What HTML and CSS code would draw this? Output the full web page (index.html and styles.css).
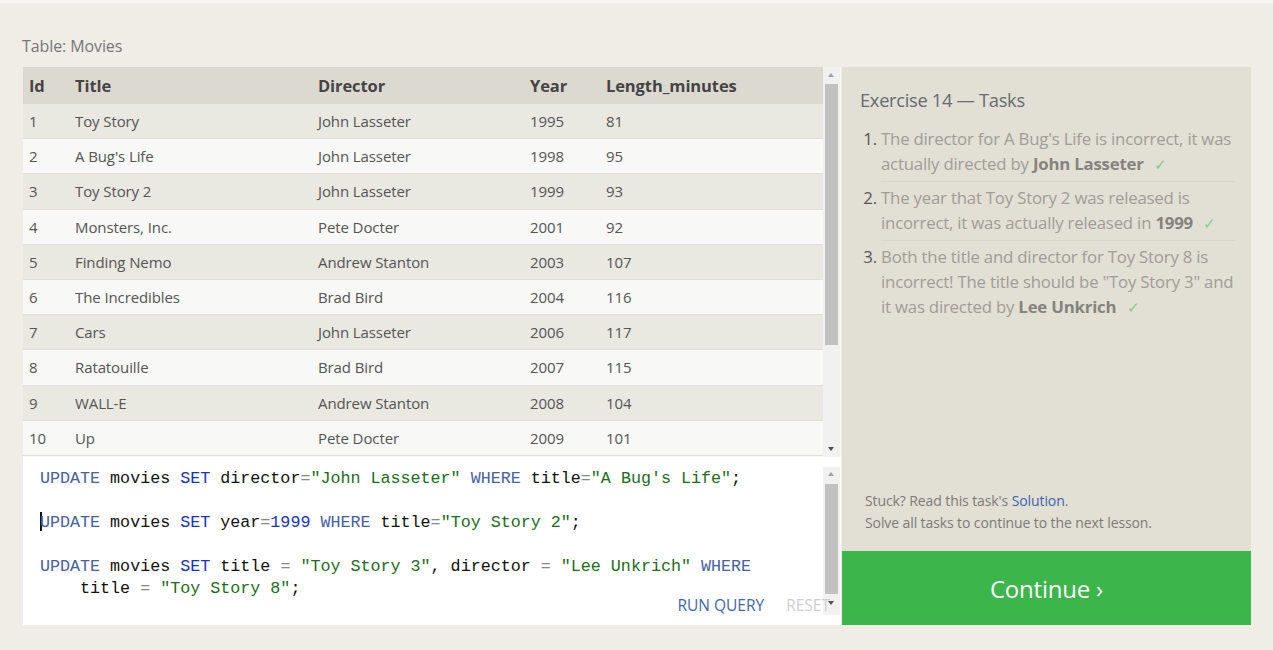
FILE: index.html
```html
<!DOCTYPE html>
<html>
<head>
<meta charset="utf-8">
<link rel="stylesheet" href="styles.css">
</head>
<body>
<div class="topline"></div>
<div class="page">
  <div class="caption">Table: Movies</div>
  <div class="main">
    <div class="left">
      <div class="table-wrap">
        <div class="table-view">
          <table class="movies">
            <thead>
              <tr><th class="c-id">Id</th><th class="c-title">Title</th><th class="c-dir">Director</th><th class="c-year">Year</th><th>Length_minutes</th></tr>
            </thead>
            <tbody>
              <tr><td>1</td><td>Toy Story</td><td>John Lasseter</td><td>1995</td><td>81</td></tr>
              <tr><td>2</td><td>A Bug's Life</td><td>John Lasseter</td><td>1998</td><td>95</td></tr>
              <tr><td>3</td><td>Toy Story 2</td><td>John Lasseter</td><td>1999</td><td>93</td></tr>
              <tr><td>4</td><td>Monsters, Inc.</td><td>Pete Docter</td><td>2001</td><td>92</td></tr>
              <tr><td>5</td><td>Finding Nemo</td><td>Andrew Stanton</td><td>2003</td><td>107</td></tr>
              <tr><td>6</td><td>The Incredibles</td><td>Brad Bird</td><td>2004</td><td>116</td></tr>
              <tr><td>7</td><td>Cars</td><td>John Lasseter</td><td>2006</td><td>117</td></tr>
              <tr><td>8</td><td>Ratatouille</td><td>Brad Bird</td><td>2007</td><td>115</td></tr>
              <tr><td>9</td><td>WALL-E</td><td>Andrew Stanton</td><td>2008</td><td>104</td></tr>
              <tr><td>10</td><td>Up</td><td>Pete Docter</td><td>2009</td><td>101</td></tr>
            </tbody>
          </table>
        </div>
        <div class="scrollbar sb-table">
          <div class="arrow up"></div>
          <div class="thumb"></div>
          <div class="arrow down"></div>
        </div>
      </div>
      <div class="editor">
        <div class="code"><div class="ln"><span class="kw">UPDATE</span> movies <span class="kw2">SET</span> director<span class="op">=</span><span class="str">"John Lasseter"</span> <span class="kw">WHERE</span> title<span class="op">=</span><span class="str">"A Bug's Life"</span>;</div><div class="ln"> </div><div class="ln"><span class="cursor"></span><span class="kw">UPDATE</span> movies <span class="kw2">SET</span> year<span class="op">=</span><span class="num">1999</span> <span class="kw">WHERE</span> title<span class="op">=</span><span class="str">"Toy Story 2"</span>;</div><div class="ln"> </div><div class="ln"><span class="kw">UPDATE</span> movies <span class="kw2">SET</span> title <span class="op">=</span> <span class="str">"Toy Story 3"</span>, director <span class="op">=</span> <span class="str">"Lee Unkrich"</span> <span class="kw">WHERE</span></div><div class="ln">    title <span class="op">=</span> <span class="str">"Toy Story 8"</span>;</div></div>
        <div class="editor-side">
          <div class="scrollbar sb-editor">
            <div class="arrow up"></div>
            <div class="thumb"></div>
            <div class="arrow down"></div>
          </div>
        </div>
        <div class="actions">
          <span class="run">RUN QUERY</span>
          <span class="reset">RESET</span>
        </div>
      </div>
    </div>
    <div class="right">
      <div class="tasks">
        <h2 class="tasks-title">Exercise 14 — Tasks</h2>
        <ol class="task-list">
          <li>The director for A Bug's Life is incorrect, it was actually directed by <b>John Lasseter</b> <span class="check">✓</span></li>
          <li>The year that Toy Story 2 was released is incorrect, it was actually released in <b>1999</b> <span class="check">✓</span></li>
          <li>Both the title and director for Toy Story 8 is incorrect! The title should be "Toy Story 3" and it was directed by <b>Lee Unkrich</b> <span class="check">✓</span></li>
        </ol>
        <div class="stuck">
          <div>Stuck? Read this task's <span class="link">Solution</span>.</div>
          <div>Solve all tasks to continue to the next lesson.</div>
        </div>
      </div>
      <div class="continue">Continue ›</div>
    </div>
  </div>
</div>
</body>
</html>
```

FILE: styles.css
```css
html, body {
  margin: 0;
  padding: 0;
}
body {
  background: #efede6;
  font-family: "Open Sans", "Noto Sans", sans-serif;
  width: 1273px;
  height: 650px;
  overflow: hidden;
}
.topline {
  height: 3px;
  background: #f7f6f2;
}
.page {
  padding: 0 0 0 22px;
}
.caption {
  margin-top: 32px;
  height: 32px;
  font-size: 16px;
  color: #777;
  letter-spacing: -0.1px;
}
.main {
  display: flex;
  align-items: flex-start;
}
.left {
  width: 818px;
  margin-left: 1px;
}
.table-wrap {
  display: flex;
  height: 390px;
  background: #f8f8f6;
}
.table-view {
  width: 800px;
  overflow: hidden;
}
.movies {
  width: 800px;
  border-collapse: collapse;
  font-size: 15px;
  color: #555;
}
.movies th {
  background: #dcdad0;
  text-align: left;
  height: 37px;
  padding: 0 6px;
  font-weight: 700;
  font-size: 16.5px;
  color: #444;
  letter-spacing: -0.1px;
}
.movies td {
  height: 34.2px;
  padding: 0 6px;
  border-bottom: 1px solid #e2dfd8;
  letter-spacing: -0.1px;
}
.movies tbody tr:nth-child(odd) td {
  background: #e9e8e1;
}
.movies tbody tr:nth-child(even) td {
  background: #f8f8f6;
}
.c-id { width: 34px; }
.c-title { width: 231px; }
.c-dir { width: 200px; }
.c-year { width: 64px; }

.scrollbar {
  width: 17px;
  background: #f1f1f1;
  display: flex;
  flex-direction: column;
}
.sb-table {
  height: 390px;
}
.arrow {
  height: 17px;
  position: relative;
}
.arrow::after {
  content: "";
  position: absolute;
  left: 5px;
  width: 0;
  height: 0;
  border-left: 3.5px solid transparent;
  border-right: 3.5px solid transparent;
}
.arrow.up::after {
  top: 6px;
  border-bottom: 4px solid #a3a3a3;
}
.arrow.down::after {
  top: 7px;
  border-top: 4px solid #505050;
}
.thumb {
  margin: 0 2px;
  background: #c1c1c1;
}
.sb-table .thumb {
  height: 261px;
}
.sb-table .arrow.down {
  margin-top: auto;
}

.editor {
  position: relative;
  height: 168px;
  background: #fff;
  display: flex;
}
.code {
  width: 800px;
  padding: 11px 0 0 17px;
  box-sizing: border-box;
  font-family: "Liberation Mono", "DejaVu Sans Mono", monospace;
  font-size: 16.7px;
  line-height: 22px;
  color: #111;
}
.ln {
  height: 22px;
  white-space: pre;
}
.kw { color: #4560a8; }
.kw2 { color: #1530d0; }
.num { color: #1530d0; }
.str { color: #1a6e1a; }
.op { color: #888; }
.cursor {
  display: inline-block;
  width: 2px;
  height: 19px;
  background: #111;
  vertical-align: -4px;
  margin-right: -2px;
}
.editor-side {
  width: 17px;
  padding-top: 10px;
}
.sb-editor {
  height: 148px;
}
.sb-editor .thumb {
  height: 110px;
}
.sb-editor .arrow.up::after {
  top: 5px;
}
.actions {
  position: absolute;
  right: 11px;
  bottom: 9px;
  font-size: 15.5px;
  display: flex;
  gap: 22px;
}
.run {
  color: #3f68b0;
}
.reset {
  color: #cfcfcf;
}

.right {
  width: 409px;
  margin-left: 1px;
  display: flex;
  flex-direction: column;
}
.tasks {
  height: 484px;
  background: #e2dfd5;
  box-sizing: border-box;
  padding: 20px 8px 0 18px;
  display: flex;
  flex-direction: column;
}
.tasks-title {
  margin: 0;
  font-size: 18.3px;
  font-weight: 400;
  color: #656b70;
  letter-spacing: -0.3px;
}
.task-list {
  margin: 14px 0 0 0;
  padding: 0 0 0 21px;
  font-size: 16.8px;
  line-height: 25px;
  color: #a09d96;
  letter-spacing: -0.2px;
}
.task-list li {
  padding: 0 0 4px 0;
  border-bottom: 1px solid #d9d6cc;
  margin-bottom: 3px;
  margin-right: 8px;
}
.task-list li:last-child {
  border-bottom: none;
}
.task-list li::marker {
  color: #555;
}
.task-list b {
  color: #85837d;
}
.check {
  color: #7fcf8a;
  margin-left: 6px;
  font-size: 15px;
}
.stuck {
  margin-top: auto;
  padding: 0 0 17px 5px;
  font-size: 14px;
  line-height: 22px;
  color: #7d7b76;
  letter-spacing: -0.1px;
}
.link {
  color: #3a64b0;
}
.continue {
  height: 74px;
  background: #3cb54a;
  color: #fff;
  font-size: 24px;
  display: flex;
  align-items: center;
  justify-content: center;
  letter-spacing: -0.2px;
}
```
